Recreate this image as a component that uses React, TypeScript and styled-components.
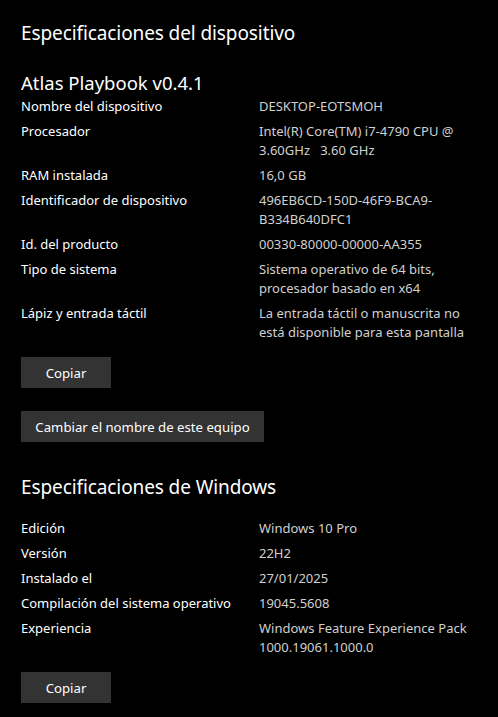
import React from "react";
import styled, { createGlobalStyle } from "styled-components";

const Global = createGlobalStyle`
  html, body { margin: 0; padding: 0; background: #000; }
  body { font-family: "Noto Sans", "Open Sans", sans-serif; color: #fff; }
`;

const Page = styled.div`
  background: #000;
  min-height: 717px;
  padding: 19px 0 0 21px;
  box-sizing: border-box;
`;

const Title = styled.h1`
  margin: 0;
  font-size: 19px;
  font-weight: 400;
  line-height: 28px;
  letter-spacing: -0.1px;
`;

const SubTitle = styled.h2`
  margin: 0;
  font-size: 18.5px;
  font-weight: 400;
  line-height: 28px;
`;

const Section = styled.section<{ $top: number }>`
  margin-top: ${(p) => p.$top}px;
`;

const Grid = styled.dl<{ $top: number }>`
  margin: ${(p) => p.$top}px 0 0 0;
  display: grid;
  grid-template-columns: 238px 1fr;
  row-gap: 6px;
  font-size: 13px;
  line-height: 19px;
`;

const Label = styled.dt`
  margin: 0;
  color: #fff;
  white-space: nowrap;
`;

const Value = styled.dd`
  margin: 0;
  color: #d0d0d0;
  white-space: nowrap;
`;

const Line = styled.div`
  white-space: pre;
`;

const Button = styled.button<{ $w: number }>`
  display: flex;
  align-items: center;
  justify-content: center;
  width: ${(p) => p.$w}px;
  height: 31px;
  margin: 0;
  padding: 0;
  border: none;
  background: #333333;
  color: #fff;
  font-family: inherit;
  font-size: 13.2px;
`;

const ButtonRow = styled.div<{ $top: number }>`
  margin-top: ${(p) => p.$top}px;
`;

type Row = { label: string; value: string[] };

const device: Row[] = [
  { label: "Nombre del dispositivo", value: ["DESKTOP-EOTSMOH"] },
  { label: "Procesador", value: ["Intel(R) Core(TM) i7-4790 CPU @", "3.60GHz   3.60 GHz"] },
  { label: "RAM instalada", value: ["16,0 GB"] },
  { label: "Identificador de dispositivo", value: ["496EB6CD-150D-46F9-BCA9-", "B334B640DFC1"] },
  { label: "Id. del producto", value: ["00330-80000-00000-AA355"] },
  { label: "Tipo de sistema", value: ["Sistema operativo de 64 bits,", "procesador basado en x64"] },
  { label: "Lápiz y entrada táctil", value: ["La entrada táctil o manuscrita no", "está disponible para esta pantalla"] },
];

const windows: Row[] = [
  { label: "Edición", value: ["Windows 10 Pro"] },
  { label: "Versión", value: ["22H2"] },
  { label: "Instalado el", value: ["27/01/2025"] },
  { label: "Compilación del sistema operativo", value: ["19045.5608"] },
  { label: "Experiencia", value: ["Windows Feature Experience Pack", "1000.19061.1000.0"] },
];

const Rows = ({ rows, top }: { rows: Row[]; top: number }) => (
  <Grid $top={top}>
    {rows.map((r) => (
      <React.Fragment key={r.label}>
        <Label>{r.label}</Label>
        <Value>
          {r.value.map((line, i) => (
            <Line key={i}>{line}</Line>
          ))}
        </Value>
      </React.Fragment>
    ))}
  </Grid>
);

export default function App() {
  return (
    <>
      <Global />
      <Page>
        <Title>Especificaciones del dispositivo</Title>
        <Section $top={22}>
          <SubTitle>Atlas Playbook v0.4.1</SubTitle>
          <Rows rows={device} top={0} />
          <ButtonRow $top={15}>
            <Button $w={90}>Copiar</Button>
          </ButtonRow>
          <ButtonRow $top={23}>
            <Button $w={243}>Cambiar el nombre de este equipo</Button>
          </ButtonRow>
        </Section>
        <Section $top={31}>
          <Title>Especificaciones de Windows</Title>
          <Rows rows={windows} top={18} />
          <ButtonRow $top={15}>
            <Button $w={90}>Copiar</Button>
          </ButtonRow>
        </Section>
      </Page>
    </>
  );
}
